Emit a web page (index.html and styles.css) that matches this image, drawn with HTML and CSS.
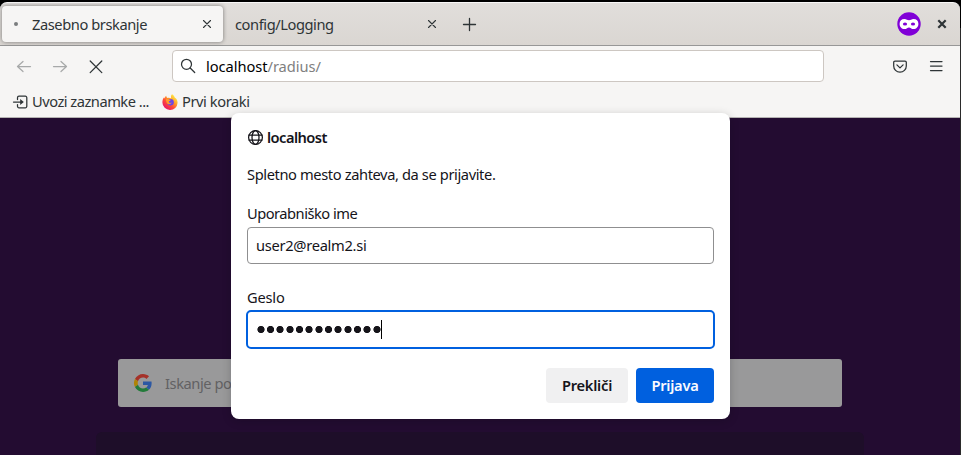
FILE: index.html
```html
<!DOCTYPE html>
<html lang="sl">
<head>
<meta charset="utf-8">
<title>Zasebno brskanje</title>
<link rel="stylesheet" href="styles.css">
</head>
<body>
<div class="window">
  <header class="titlebar">
    <div class="tab tab-active">
      <span class="busy"></span>
      <span class="tab-label">Zasebno brskanje</span>
      <svg class="tab-close" width="10" height="10" viewBox="0 0 10 10"><path d="M1.500 1.500l7 7M8.500 1.500l-7 7"/></svg>
    </div>
    <div class="tab">
      <span class="tab-label">config/Logging</span>
      <svg class="tab-close" width="10" height="10" viewBox="0 0 10 10"><path d="M1.500 1.500l7 7M8.500 1.500l-7 7"/></svg>
    </div>
    <svg class="new-tab" width="13" height="13" viewBox="0 0 13 13"><path d="M6.500.5v12M.5 6.500h12"/></svg>
    <svg class="mask" width="24" height="24" viewBox="0 0 24 24"><circle cx="12" cy="12" r="11.700" fill="#8000d7"/><path fill="#fff" d="M7.500 7c1.900 0 3 1.300 4.500 1.300S14.600 7 16.500 7c3 0 4.900 1.600 4.900 4.800 0 3.200-2 5.300-4.900 5.300-2.200 0-3-1.700-4.500-1.700s-2.300 1.700-4.500 1.700c-2.900 0-4.900-2.100-4.900-5.300C2.600 8.600 4.500 7 7.500 7z"/><ellipse cx="8" cy="11.900" rx="2.100" ry="1.500" fill="#8000d7"/><ellipse cx="16" cy="11.900" rx="2.100" ry="1.500" fill="#8000d7"/></svg>
    <svg class="win-close" width="10" height="10" viewBox="0 0 10 10"><path d="M1.300 1.300l7.400 7.400M8.700 1.300L1.300 8.700"/></svg>
  </header>
  <nav class="toolbar">
    <svg class="ico dim" width="16" height="16" viewBox="0 0 16 16"><path d="M14.500 7.500H1.500M7 2.500l-5.500 5 5.500 5"/></svg>
    <svg class="ico dim" width="16" height="16" viewBox="0 0 16 16"><path d="M1.500 7.500h13M9 2.500l5.500 5-5.500 5"/></svg>
    <svg class="ico" width="16" height="16" viewBox="0 0 16 16"><path d="M2.200 2l11.600 11.600M13.800 2L2.200 13.600"/></svg>
    <div class="urlbar">
      <svg class="ico" width="16" height="16" viewBox="0 0 16 16"><circle cx="6.500" cy="6.300" r="5"/><path d="M10.200 10l4.500 4.500"/></svg>
      <span class="url"><b>localhost</b>/radius/</span>
    </div>
    <svg class="ico pocket" width="16" height="16" viewBox="0 0 16 16"><path d="M3 2h10a1.300 1.300 0 0 1 1.300 1.300v3.600a6.300 6.300 0 0 1-12.600 0V3.300A1.300 1.300 0 0 1 3 2zM4.900 5.900L8 8.900l3.100-3"/></svg>
    <svg class="ico" width="16" height="16" viewBox="0 0 16 16"><path d="M2.500 2.500h11.500M2.500 7h11.500M2.500 11.500h11.500"/></svg>
  </nav>
  <div class="bookmarks">
    <svg class="ico import" width="16" height="16" viewBox="0 0 16 16"><path d="M4.500 5.500V3.700a1.500 1.500 0 0 1 1.500-1.500h6.300a1.500 1.500 0 0 1 1.500 1.500v8.600a1.500 1.500 0 0 1-1.500 1.500H6a1.500 1.500 0 0 1-1.500-1.500v-1.800M.5 8H8"/><path class="solid" d="M7.200 4.900L10.800 8l-3.600 3.100z"/></svg>
    <span class="t-import">Uvozi zaznamke ...</span>
    <svg class="fox" width="16" height="16" viewBox="0 0 16 16">
      <defs><linearGradient id="fire" x1=".85" y1=".1" x2=".2" y2=".9"><stop offset="0" stop-color="#fff04a"/><stop offset=".35" stop-color="#ffa128"/><stop offset=".65" stop-color="#ff4b38"/><stop offset="1" stop-color="#e81667"/></linearGradient></defs>
      <path fill="url(#fire)" d="M10 .3c1.800 1.100 2.600 2.400 2.900 3.500 1-.1 2.700 2.100 2.700 5A7.500 7.500 0 0 1 8 15.900 7.500 7.500 0 0 1 .4 8.500c0-2.200.6-4 1.700-5.200l.4 1.200C3 3.700 3.300 2.500 4.200 1.800c0 1 .4 1.700 1.200 2.100 1.500-.4 3 .1 3.800.4C8.600 2.700 9.100 1.300 10 .3z"/>
      <circle cx="8.500" cy="8.300" r="3.300" fill="#6b45e8"/>
      <path fill="#ff9b2b" d="M3.900 5.100c1.500-.7 2.800-.1 3.500.6h1.400c-.2 1.200-1.900 1.200-2 1.900-.1 1 1.200 1.800 2.900.9-.7 2-3.800 2.400-4.900.4-.7-1.400-.9-2.600-.9-3.800z"/>
    </svg>
    <span>Prvi koraki</span>
  </div>
  <main class="page">
    <div class="search">
      <svg width="18" height="18" viewBox="0 0 48 48"><path fill="#a53129" d="M24 9.500c3.540 0 6.710 1.220 9.210 3.600l6.850-6.850C35.900 2.380 30.470 0 24 0 14.620 0 6.510 5.380 2.560 13.220l7.980 6.190C12.430 13.720 17.740 9.500 24 9.500z"/><path fill="#2c58a3" d="M46.980 24.550c0-1.570-.15-3.090-.38-4.550H24v9.020h12.940c-.58 2.960-2.260 5.480-4.780 7.180l7.730 6c4.510-4.180 7.090-10.360 7.090-17.650z"/><path fill="#b08305" d="M10.530 28.590a14.500 14.500 0 0 1 0-9.180l-7.980-6.190a24 24 0 0 0 0 21.560z"/><path fill="#237b3a" d="M24 48c6.480 0 11.930-2.130 15.890-5.810l-7.730-6c-2.150 1.450-4.920 2.300-8.160 2.300-6.260 0-11.570-4.220-13.470-9.910l-7.980 6.190C6.510 42.620 14.620 48 24 48z"/></svg>
      <span>Iskanje po</span>
    </div>
    <div class="notice"></div>
  </main>
  <section class="dialog">
    <div class="origin">
      <svg class="ico" width="16" height="16" viewBox="0 0 16 16"><circle cx="8.500" cy="8.500" r="6.900"/><ellipse cx="8.500" cy="8.500" rx="3.500" ry="6.900"/><path d="M2 6h13M2 11h13"/></svg>
      <span>localhost</span>
    </div>
    <p class="message">Spletno mesto zahteva, da se prijavite.</p>
    <label class="lbl t-user">Uporabniško ime</label>
    <div class="field"><span class="t-value">user2@realm2.si</span></div>
    <label class="lbl t-pass">Geslo</label>
    <div class="field focus"><i></i><i></i><i></i><i></i><i></i><i></i><i></i><i></i><i></i><i></i><i></i><i></i><i></i><span class="caret"></span></div>
    <div class="actions">
      <div class="btn cancel">Prekliči</div>
      <div class="btn ok">Prijava</div>
    </div>
  </section>
</div>
</body>
</html>
```

FILE: styles.css
```css
* { box-sizing: border-box; }
body {
  margin: 0;
  background: linear-gradient(#000 28px, #2b2b2b 28px);
  font: 14.67px/20px "Noto Sans", sans-serif;
  letter-spacing: -.43px;
  color: #2e3436;
}
svg { display: block; flex: none; fill: none; overflow: visible; stroke-linecap: round; stroke-linejoin: round; }
.window {
  position: relative;
  display: flex;
  flex-direction: column;
  width: 961px;
  height: 455px;
  padding: 2px 1px 0 0;
  overflow: hidden;
  white-space: nowrap;
}
.titlebar, .toolbar, .bookmarks, .search { flex: none; }
.titlebar {
  display: flex;
  align-items: center;
  height: 44px;
  padding: 0 13px 0 2px;
  background: linear-gradient(#e1dedb, #dad6d2);
  border-top: 1px solid #f8f7f7;
  border-bottom: 1px solid #979797;
  border-radius: 7px 7px 0 0;
}
.tab { display: flex; align-items: center; width: 225px; height: 36px; padding: 0 15px 0 8px; }
.tab-active {
  width: 221px;
  margin: 0 4px 0 0;
  padding: 0 11px 0 12px;
  background: #f6f5f4;
  border-radius: 4px;
  box-shadow: 0 0 4px rgba(0, 0, 0, .45);
}
.busy { width: 4px; height: 4px; margin-right: 14px; border-radius: 2px; background: #7a7d7e; }
.tab-label { flex: 1; padding-bottom: 1px; }
.tab-close, .new-tab { stroke: #2e3436; stroke-width: 1.1; }
.new-tab { margin: 1px 0 0 11px; stroke-width: 1.3; }
.mask { margin-left: auto; }
.win-close { margin-left: 16px; stroke: #2e3436; stroke-width: 2.2; stroke-linecap: butt; }
.ico { stroke: #2e3436; stroke-width: 1.25; }
.dim { stroke: #a7a9a9; }
.solid { fill: #2e3436; stroke: none; }
.toolbar { display: flex; align-items: center; gap: 20px; height: 41px; padding: 0 16px; background: #f6f5f4; }
.urlbar {
  display: flex;
  align-items: center;
  gap: 10px;
  width: 652px;
  height: 32px;
  margin: -1px 0 0 48px;
  padding-left: 7px;
  background: #fff;
  border: 1px solid #cdc7c2;
  border-radius: 4px;
}
.url { color: #808080; letter-spacing: -.05px; padding-bottom: 1px; }
.url b { font-weight: 400; color: #000; }
.pocket { margin-left: auto; }
.bookmarks { display: flex; align-items: center; height: 31px; padding: 0 0 1px 13px; background: #f6f5f4; border-bottom: 1px solid #b5b3b2; }
.bookmarks span { padding-bottom: 2px; }
.import { margin-right: 3px; }
.t-import { width: 117px; letter-spacing: -.5px; }
.fox { margin: 0 4px 0 13px; }
.page { flex: 1; background: #230c31; }
.search {
  display: flex;
  align-items: center;
  gap: 13px;
  width: 724px;
  height: 48px;
  margin: 241px 0 0 118px;
  padding-left: 16px;
  background: #99999a;
  border-radius: 3px;
  color: #626163;
}
.notice { width: 768px; height: 40px; margin: 25px 0 0 96px; background: #1e0e29; border-radius: 6px; }
.dialog {
  position: absolute;
  left: 231px;
  top: 113px;
  width: 499px;
  height: 306px;
  padding: 14px 16px 16px;
  display: flex;
  flex-direction: column;
  background: #fff;
  border-radius: 8px;
  box-shadow: 0 2px 10px rgba(12, 12, 13, .2);
  color: #15141a;
}
.dialog .ico { stroke: #15141a; }
.origin { display: flex; align-items: center; gap: 4px; font-weight: 600; letter-spacing: -.55px; }
.message { margin: 17px 0 19px; letter-spacing: -.39px; }
.lbl { margin-bottom: 4px; }
.t-user { letter-spacing: -.5px; }
.t-pass { letter-spacing: -.2px; }
.t-value { padding-bottom: 2px; letter-spacing: -.29px; }
.field {
  display: flex;
  align-items: center;
  height: 37px;
  padding-left: 8px;
  margin-bottom: 23px;
  border: 1px solid #8f8f90;
  border-radius: 4px;
}
.focus { height: 39px; margin: -1px -1px 0; border: 2px solid #0060df; border-radius: 5px; }
.field i { width: 9.67px; height: 9px; background: radial-gradient(circle, #15141a 3.2px, transparent 4px); }
.caret { width: 1px; height: 19px; margin-left: -1px; background: #000; }
.actions { display: flex; justify-content: flex-end; gap: 8px; margin-top: 19px; }
.btn { display: flex; align-items: center; justify-content: center; height: 35px; padding-bottom: 1px; border-radius: 4px; font-weight: 600; letter-spacing: -.25px; }
.cancel { width: 82px; background: #f0f0f1; }
.ok { width: 78px; background: #0060df; color: #fbfbfe; }
```
